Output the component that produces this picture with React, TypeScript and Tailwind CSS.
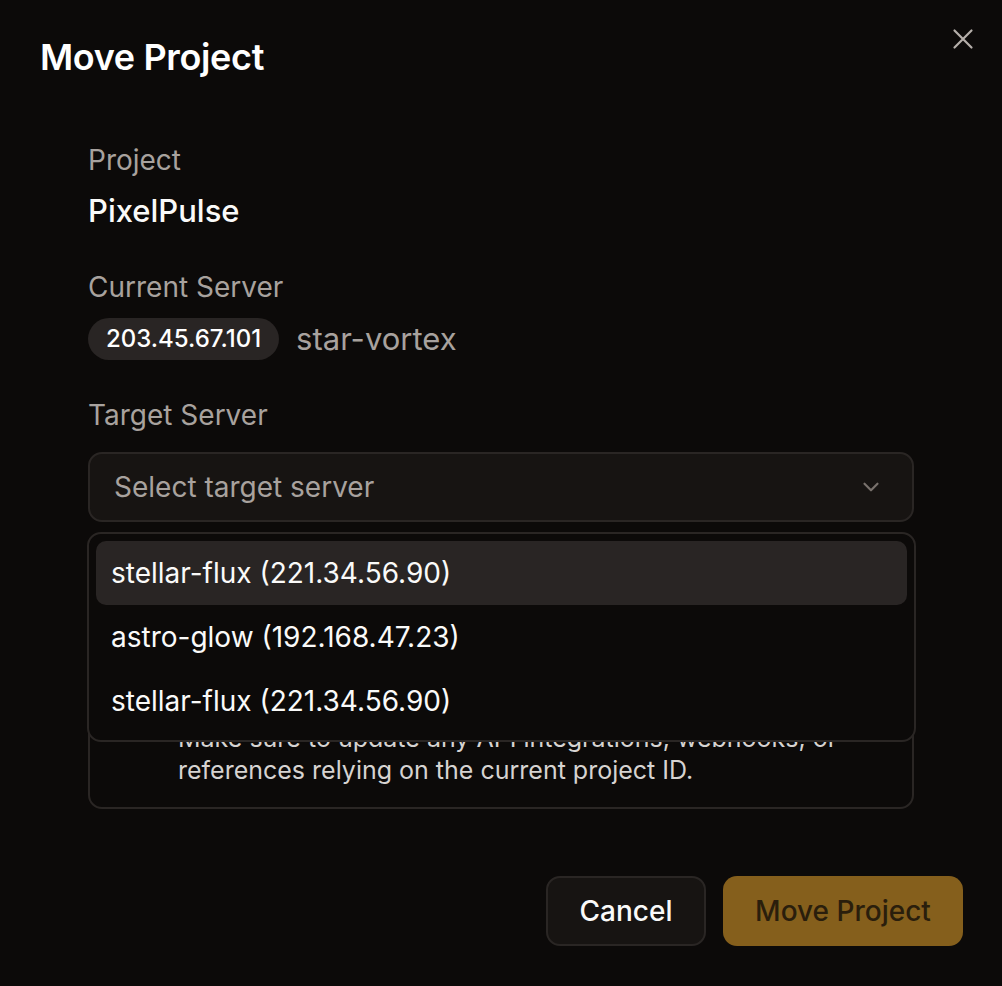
import { useState } from "react";

const servers = [
  { name: "stellar-flux", ip: "221.34.56.90" },
  { name: "astro-glow", ip: "192.168.47.23" },
  { name: "stellar-flux", ip: "221.34.56.90" },
];

export default function App() {
  const [active] = useState(0);

  return (
    <div
      className="min-h-[986px] w-full bg-[#0c0a09] text-white relative"
      style={{ fontFamily: "Inter, 'Noto Sans', sans-serif" }}
    >
      {/* Close */}
      <button className="absolute right-[27px] top-[27px] w-[24px] h-[24px] flex items-center justify-center text-[#b5afaa]">
        <svg width="24" height="24" viewBox="0 0 24 24" fill="none" stroke="currentColor" strokeWidth="2.2" strokeLinecap="round">
          <path d="M3.5 3.5L20.5 20.5M20.5 3.5L3.5 20.5" />
        </svg>
      </button>

      <div className="pt-[37px] px-10">
        <h1 className="text-[36px] leading-[40px] font-semibold tracking-[-0.01em]">Move Project</h1>
      </div>

      <div className="px-[88px] pt-[65px]">
        {/* Project */}
        <div className="text-[28px] leading-[36px] text-[#a8a29e]">Project</div>
        <div className="mt-[13px] text-[31px] leading-[40px] font-medium text-[#fafaf9]">PixelPulse</div>

        {/* Current server */}
        <div className="mt-[38px] text-[28px] leading-[36px] text-[#a8a29e]">Current Server</div>
        <div className="mt-[13px] flex items-center gap-[17px]">
          <span className="h-[42px] px-[18px] rounded-full bg-[#292524] text-[24px] font-medium flex items-center">
            203.45.67.101
          </span>
          <span className="text-[31px] leading-[40px] text-[#a8a29e]">star-vortex</span>
        </div>

        {/* Target server */}
        <div className="mt-[37px] text-[28px] leading-[36px] text-[#a8a29e]">Target Server</div>
        <div className="relative mt-[19px]">
          <div className="h-[70px] rounded-[14px] border-2 border-[#2a2624] bg-[#171412] flex items-center justify-between pl-[24px] pr-[28px]">
            <span className="text-[28px] text-[#a8a29e]">Select target server</span>
            <svg width="26" height="26" viewBox="0 0 24 24" fill="none" stroke="#78716c" strokeWidth="2" strokeLinecap="round" strokeLinejoin="round">
              <path d="M6 9l6 6 6-6" />
            </svg>
          </div>

          {/* Notice card, mostly covered by the open dropdown */}
          <div className="mt-[24px] rounded-[14px] border-2 border-[#2a2624] pl-[88px] pr-[24px] pt-[174px] pb-[21px]">
            <div className="text-[25px] leading-[32px] text-[#d6d3d1]">
              <div>Make sure to update any API integrations, webhooks, or</div>
              <div>references relying on the current project ID.</div>
            </div>
          </div>

          {/* Dropdown */}
          <div className="absolute left-[-1px] right-[-2px] top-[80px] rounded-[14px] border-2 border-[#2a2624] bg-[#0c0a09] p-[7px]">
            {servers.map((s, i) => (
              <div
                key={i}
                className={
                  "h-[64px] rounded-[10px] flex items-center px-[15px] text-[28px] text-[#fafaf9] " +
                  (i === active ? "bg-[#292524]" : "")
                }
              >
                {s.name} ({s.ip})
              </div>
            ))}
          </div>
        </div>
      </div>

      {/* Footer */}
      <div className="absolute left-0 right-0 top-[876px] flex justify-end gap-[17px] pr-[39px]">
        <button className="h-[70px] w-[160px] rounded-[14px] border-2 border-[#2a2624] bg-[#171412] text-[28px] font-medium text-[#fafaf9]">
          Cancel
        </button>
        <button className="h-[70px] w-[240px] rounded-[14px] bg-[#855f1c] text-[28px] font-medium text-[#2a1e0c]">
          Move Project
        </button>
      </div>
    </div>
  );
}
